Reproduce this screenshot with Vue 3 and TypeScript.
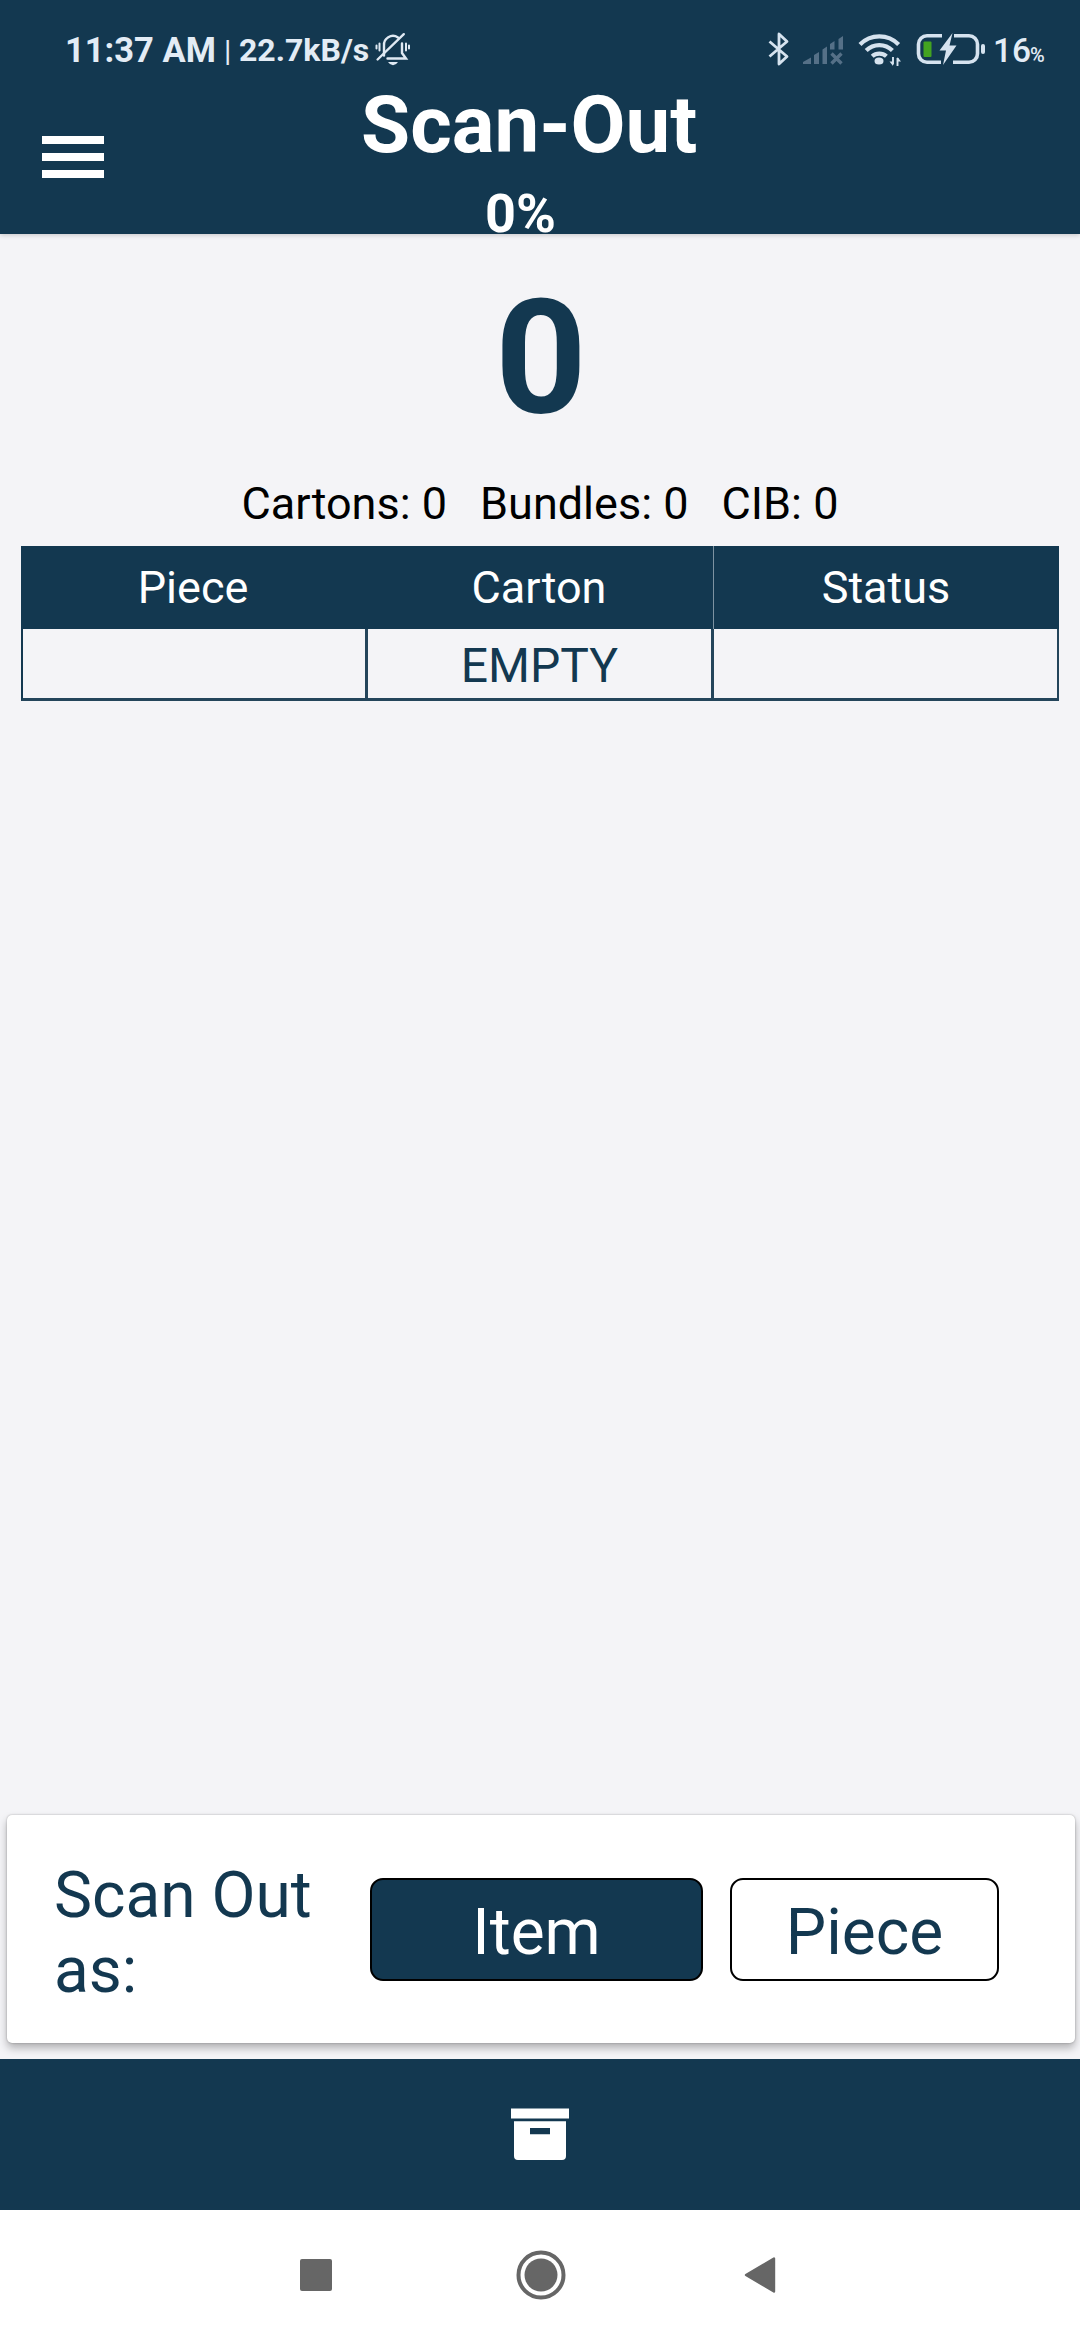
<script setup lang="ts">
import { ref } from 'vue'

type Mode = 'Item' | 'Piece'

const total = ref<number>(0)
const counts = ref([
  { label: 'Cartons', value: 0 },
  { label: 'Bundles', value: 0 },
  { label: 'CIB', value: 0 },
])
const columns = ['Piece', 'Carton', 'Status']
const rows = ref<string[][]>([['', 'EMPTY', '']])
const modes: Mode[] = ['Item', 'Piece']
const mode = ref<Mode>('Item')
</script>

<template>
  <div class="screen">
    <header class="header">
      <div class="status">
        <span class="time">11:37 AM</span>
        <span class="sep">|</span>
        <span class="speed">22.7kB/s</span>
        <svg class="bell" viewBox="0 0 36 36" width="36" height="36">
          <g fill="none" stroke="#dfe9f3" stroke-width="2.4" stroke-linecap="round">
            <path d="M9 24.5V15a9 9 0 0 1 14-8.5M27 12.5v9.500l4 5.500H12.500" />
            <path d="M2.600 28.500L28.800 3.200" />
            <path d="M4.500 12.500v7M1.500 14.500v3M31 12.500v7M34 14.500v3" stroke-width="2" />
          </g>
          <path d="M13 31h10q-2 3.200-5 3.200t-5-3.200z" fill="#dfe9f3" />
        </svg>
        <span class="grow"></span>
        <svg class="bt" viewBox="0 0 24 36" width="24" height="36">
          <path d="M2.500 10.500L20 25.500L12 33V3L20 10.500L2.500 25.500" fill="none" stroke="#d6e3ef" stroke-width="2.800" stroke-linejoin="round" />
        </svg>
        <svg class="signal" viewBox="0 0 42 32" width="42" height="32">
          <g fill="#557087">
            <path d="M1 31v-2l8-4.500v6.500zM12 22l5-3v12h-5zM20.500 16.500l4.500-3v17.500h-4.500zM28 11l4.500-3v8.500H28zM36.500 6L41 3v13.500h-4.500z" />
          </g>
          <path d="M29.500 20.500l10 10M39.500 20.500l-10 10" stroke="#557087" stroke-width="3.400" />
        </svg>
        <svg class="wifi" viewBox="0 0 44 36" width="44" height="36">
          <g fill="none" stroke="#d6e3ef" stroke-width="4.200">
            <path d="M2 13.500a27 27 0 0 1 38.600 0" />
            <path d="M8.200 19.600a18.500 18.500 0 0 1 26.200 0" />
            <path d="M14.200 25.300a10.500 10.500 0 0 1 14.200 0" />
          </g>
          <ellipse cx="21" cy="30" rx="4.500" ry="3.600" fill="#d6e3ef" />
          <path d="M35 26v7.500M39.500 35v-8" stroke="#d6e3ef" stroke-width="1.900" />
          <path d="M31.500 30.500h3.500v4.500zM43 30.500h-3.500v-4.500z" fill="#d6e3ef" />
        </svg>
        <svg class="battery" viewBox="0 0 70 34" width="70" height="34">
          <path d="M26 3.700H11a8.500 8.500 0 0 0-8.500 8.500v9.600a8.500 8.500 0 0 0 8.500 8.500H25M37 30.300H53a8.500 8.500 0 0 0 8.500-8.500V12.200a8.500 8.500 0 0 0-8.500-8.500H38" fill="none" stroke="#d6e3ef" stroke-width="3.600" />
          <rect x="7.500" y="9.500" width="8" height="15.500" rx="1" fill="#43a320" />
          <path d="M36.500 1L23.500 18.500h6.500L27 33L40.500 13.500h-7z" fill="#d6e3ef" />
          <rect x="65" y="12" width="4" height="10" rx="2" fill="#d6e3ef" />
        </svg>
        <span class="level">16</span><span class="pct">%</span>
      </div>
      <div class="bar">
        <button class="menu" aria-label="Menu"><i></i><i></i><i></i></button>
        <div class="titles">
          <h1>Scan-Out</h1>
          <p>0%</p>
        </div>
      </div>
    </header>

    <main class="content">
      <div class="total">{{ total }}</div>
      <div class="counts">
        <span v-for="c in counts" :key="c.label">{{ c.label }}: {{ c.value }}</span>
      </div>
      <div class="table">
        <div class="row head">
          <div v-for="col in columns" :key="col" class="cell">{{ col }}</div>
        </div>
        <div v-for="(row, r) in rows" :key="r" class="row body">
          <div v-for="(cell, i) in row" :key="i" class="cell">{{ cell }}</div>
        </div>
      </div>
    </main>

    <section class="card">
      <div class="label">Scan Out as:</div>
      <button
        v-for="m in modes"
        :key="m"
        class="mode"
        :class="[m.toLowerCase(), { active: mode === m }]"
        @click="mode = m"
      >{{ m }}</button>
    </section>

    <nav class="tabs">
      <svg viewBox="0 0 58 53" width="58" height="53" fill="#fff">
        <path d="M0 0.500h58v10H0z" />
        <path fill-rule="evenodd" d="M3 13.300h52v34.700a4 4 0 0 1-4 4H7a4 4 0 0 1-4-4zM19 20v6.300h20V20z" />
      </svg>
    </nav>

    <footer class="system">
      <svg class="recent" viewBox="0 0 32 32" width="32" height="32"><rect width="32" height="32" rx="2" fill="#666" /></svg>
      <svg class="home" viewBox="0 0 50 50" width="50" height="50">
        <circle cx="25" cy="25" r="22.500" fill="none" stroke="#666" stroke-width="4" />
        <circle cx="25" cy="25" r="16.500" fill="#666" />
      </svg>
      <svg class="back" viewBox="0 0 32 38" width="32" height="38">
        <path d="M2 19L30 2.500v33z" fill="#666" stroke="#666" stroke-width="2.400" stroke-linejoin="round" />
      </svg>
    </footer>
  </div>
</template>

<style>
body {
  margin: 0;
}
</style>

<style scoped>
.screen {
  width: 1080px;
  height: 2340px;
  display: flex;
  flex-direction: column;
  overflow: hidden;
  background: #f4f4f7;
  font-family: Roboto, "Liberation Sans", sans-serif;
  color: #133850;
}
button {
  margin: 0;
  font: inherit;
  box-sizing: border-box;
}
svg {
  display: block;
  flex: none;
}
.header {
  height: 234px;
  flex: none;
  background: #133850;
  color: #fff;
  box-shadow: 0 1px 5px rgba(0, 0, 0, 0.2);
}
.status {
  height: 80px;
  display: flex;
  align-items: flex-start;
  box-sizing: border-box;
  padding: 31px 0 0 65px;
  color: #e3ecf5;
  white-space: nowrap;
}
.status span {
  line-height: 39px;
}
.time {
  width: 159px;
  font-size: 34.500px;
  font-weight: 700;
}
.sep {
  width: 15px;
  font-size: 30px;
}
.speed {
  width: 136px;
  font-size: 32px;
  font-weight: 700;
}
.grow {
  flex: 1;
}
.bt {
  margin: 0 11px 0 0;
}
.signal {
  margin: 2px 14px 0 0;
}
.wifi {
  margin: 0 14px 0 0;
}
.battery {
  margin: 1px 7px 0 0;
}
.level {
  width: 37px;
  font-size: 33.500px;
  font-weight: 500;
}
.pct {
  width: 50px;
  font-size: 20px;
  font-weight: 500;
}
.status .pct {
  line-height: 48px;
}
.bar {
  display: flex;
  align-items: flex-start;
}
.menu {
  width: 62px;
  margin: 56px 0 0 42px;
  padding: 0;
  border: 0;
  background: none;
  display: flex;
  flex-direction: column;
  gap: 9.5px;
}
.menu i {
  height: 7.600px;
  background: #fff;
}
.titles {
  width: 340px;
  margin-left: 257px;
  display: flex;
  flex-direction: column;
}
h1,
p {
  margin: 0;
  font-weight: 700;
}
h1 {
  font-size: 79.800px;
  line-height: 90px;
  white-space: nowrap;
}
p {
  margin: 18px 0 0 124px;
  font-size: 54px;
  line-height: 52px;
}
.content {
  flex: 1;
  display: flex;
  flex-direction: column;
  align-items: center;
  padding-top: 30px;
}
.total {
  padding-left: 2px;
  font-size: 160px;
  line-height: 188px;
  font-weight: 700;
}
.counts {
  margin-top: 26px;
  display: flex;
  gap: 33px;
  font-size: 45px;
  line-height: 52px;
  color: #000;
}
.table {
  width: 1038px;
  margin-top: 16px;
}
.row {
  display: grid;
  grid-template-columns: repeat(3, 1fr);
  text-align: center;
}
.cell {
  box-sizing: border-box;
}
.head {
  background: #133850;
  color: #fff;
  font-size: 45px;
  line-height: 83px;
}
.head .cell {
  padding-right: 2px;
}
.head .cell:last-child {
  padding-right: 0;
  box-shadow: inset 1px 0 0 #7d92a1;
}
.body {
  font-size: 48px;
  line-height: 68px;
  border-left: 2px solid #133850;
  border-bottom: 3px solid #24455b;
}
.body .cell {
  height: 68.500px;
  padding-top: 3px;
  border-right: 3px solid #24455b;
}
.body .cell:last-child {
  border-right-width: 2px;
}
.card {
  flex: none;
  height: 228px;
  margin: 0 5px 16px 7px;
  box-sizing: border-box;
  padding-left: 47px;
  display: flex;
  align-items: center;
  background: #fff;
  border-radius: 5px;
  box-shadow: 0 0 2px rgba(0, 0, 0, 0.3), 0 5px 8px rgba(0, 0, 0, 0.28);
}
.label {
  width: 316px;
  padding-top: 8px;
  font-size: 64px;
  line-height: 75px;
}
.mode {
  height: 103px;
  padding: 7px 0 0;
  border: 2px solid #000;
  border-radius: 13px;
  background: #fff;
  color: #133850;
  font-size: 64px;
  line-height: 75px;
  text-align: center;
}
.mode.active {
  background: #133850;
  color: #fff;
}
.item {
  width: 333px;
  margin-right: 27px;
}
.piece {
  width: 269px;
}
.tabs {
  flex: none;
  height: 151px;
  display: flex;
  justify-content: center;
  align-items: center;
  background: #133850;
}
.system {
  flex: none;
  height: 130px;
  display: flex;
  align-items: center;
  background: #fff;
}
.recent {
  margin-left: 300px;
}
.home {
  margin-left: 183.500px;
}
.back {
  margin-left: 178.500px;
}
</style>
